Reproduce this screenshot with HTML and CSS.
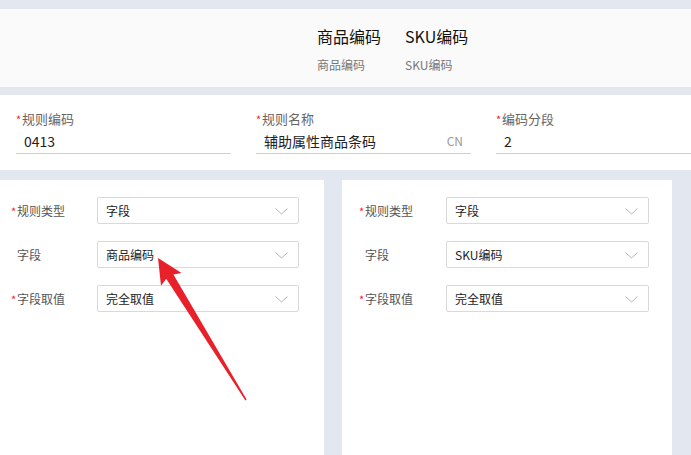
FILE: index.html
```html
<html>
<head>
    <meta charset="UTF-8">
    <meta name="viewport" content="width=device-width, initial-scale=1.0">
    <title>编码规则</title>
    <link rel="stylesheet" href="styles.css">
</head>
<body>

<div class="header">
    <div class="headCol">
        <div class="headTitle">商品编码</div>
        <div class="headSub">商品编码</div>
    </div>
    <div class="headCol">
        <div class="headTitle">SKU编码</div>
        <div class="headSub">SKU编码</div>
    </div>
</div>

<div class="basePanel">
    <div class="field">
        <div class="fieldLabel"><span class="req">*</span>规则编码</div>
        <div class="fieldValue">0413</div>
    </div>
    <div class="field">
        <div class="fieldLabel"><span class="req">*</span>规则名称</div>
        <div class="fieldValue">辅助属性商品条码<span class="lang">CN</span></div>
    </div>
    <div class="field">
        <div class="fieldLabel"><span class="req">*</span>编码分段</div>
        <div class="fieldValue">2</div>
    </div>
</div>

<div class="cards">
    <div class="card cardLeft">
        <div class="row">
            <div class="rowLabel"><span class="req">*</span>规则类型</div>
            <div class="select">字段<svg class="chevron" width="13" height="7" viewBox="0 0 13 7"><polyline points="0.5,0.5 6.5,6 12.5,0.5"/></svg></div>
        </div>
        <div class="row">
            <div class="rowLabel"><span class="req blank">*</span>字段</div>
            <div class="select">商品编码<svg class="chevron" width="13" height="7" viewBox="0 0 13 7"><polyline points="0.5,0.5 6.5,6 12.5,0.5"/></svg></div>
        </div>
        <div class="row">
            <div class="rowLabel"><span class="req">*</span>字段取值</div>
            <div class="select">完全取值<svg class="chevron" width="13" height="7" viewBox="0 0 13 7"><polyline points="0.5,0.5 6.5,6 12.5,0.5"/></svg></div>
        </div>
    </div>
    <div class="card cardRight">
        <div class="row">
            <div class="rowLabel"><span class="req">*</span>规则类型</div>
            <div class="select">字段<svg class="chevron" width="13" height="7" viewBox="0 0 13 7"><polyline points="0.5,0.5 6.5,6 12.5,0.5"/></svg></div>
        </div>
        <div class="row">
            <div class="rowLabel"><span class="req blank">*</span>字段</div>
            <div class="select">SKU编码<svg class="chevron" width="13" height="7" viewBox="0 0 13 7"><polyline points="0.5,0.5 6.5,6 12.5,0.5"/></svg></div>
        </div>
        <div class="row">
            <div class="rowLabel"><span class="req">*</span>字段取值</div>
            <div class="select">完全取值<svg class="chevron" width="13" height="7" viewBox="0 0 13 7"><polyline points="0.5,0.5 6.5,6 12.5,0.5"/></svg></div>
        </div>
    </div>
</div>

<svg class="arrow" width="691" height="455" viewBox="0 0 691 455">
    <polygon fill="#e8202a"
             points="158,258 181.5,273 173.4,274.6 246.6,399.6 245.4,400.4 166.2,278.8 161,285.8"/>
</svg>

</body>
</html>
```

FILE: styles.css
```css
body {
    background-color: #e3e7ef;
    margin: 0;
    padding-top: 9px;
    font-family: "Noto Sans CJK SC", "Noto Sans", sans-serif;
    position: relative;
    overflow: hidden;
    height: 455px;
    box-sizing: border-box;
}

.header {
    background-color: #fafafa;
    height: 78px;
    box-sizing: border-box;
    padding: 16px 0 0 317px;
    display: flex;
    gap: 24px;
}
.headTitle {
    font-size: 16px;
    line-height: 22px;
    color: #111;
}
.headSub {
    font-size: 12px;
    line-height: 16px;
    color: #777;
    margin-top: 10px;
}

.basePanel {
    background-color: #fff;
    margin-top: 8px;
    height: 75px;
    box-sizing: border-box;
    padding: 15px 0 0 16px;
    display: flex;
    gap: 25px;
}
.field {
    width: 215px;
    flex-shrink: 0;
}
.fieldLabel {
    font-size: 13px;
    line-height: 18px;
    color: #666;
}
.req {
    color: #f5222d;
    font-size: 11px;
    display: inline-block;
    width: 5px;
    margin-right: 1px;
}
.req.blank {
    visibility: hidden;
}
.fieldValue {
    font-size: 14px;
    line-height: 20px;
    color: #222;
    margin-top: 3px;
    padding: 0 8px 2px 8px;
    border-bottom: 1px solid #cfcfcf;
    display: flex;
    justify-content: space-between;
}
.lang {
    font-size: 12px;
    color: #999;
}

.cards {
    margin-top: 10px;
    display: flex;
    gap: 18px;
}
.card {
    background-color: #fff;
    height: 275px;
    box-sizing: border-box;
    padding-top: 17px;
    display: flex;
    flex-direction: column;
    gap: 17px;
}
.cardLeft {
    width: 324px;
    padding-left: 11px;
}
.cardRight {
    width: 330px;
    padding-left: 17px;
}
.row {
    display: flex;
    align-items: center;
}
.rowLabel {
    width: 86px;
    font-size: 12px;
    color: #555;
}
.cardRight .rowLabel {
    width: 87px;
}
.select {
    width: 202px;
    height: 27px;
    box-sizing: border-box;
    border: 1px solid #d9d9d9;
    border-radius: 2px;
    padding-left: 8px;
    font-size: 12px;
    line-height: 25px;
    color: #222;
    position: relative;
}
.cardRight .select {
    width: 203px;
}
.chevron {
    position: absolute;
    right: 10px;
    top: 10px;
    fill: none;
    stroke: #b3b3b3;
    stroke-width: 1;
}

.arrow {
    position: absolute;
    left: 0;
    top: 0;
    pointer-events: none;
}
```
